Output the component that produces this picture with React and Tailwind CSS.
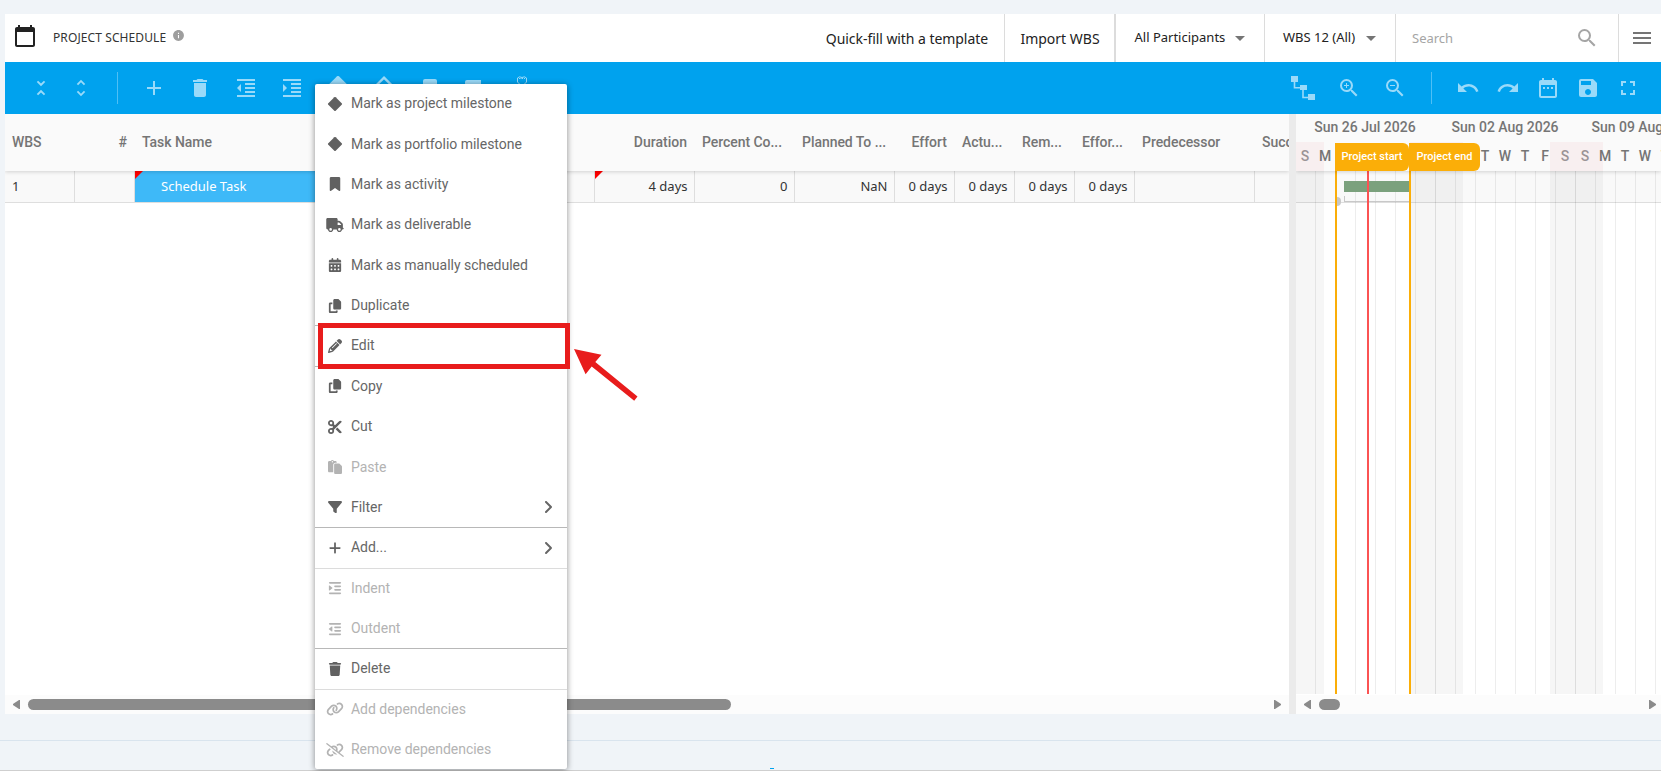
import {
  MdAdd, MdArrowDropDown, MdCalendarToday, MdDateRange, MdDelete, MdFormatIndentDecrease,
  MdFormatIndentIncrease, MdFullscreen, MdInfo, MdMenu, MdRedo, MdSave, MdSearch, MdUndo,
  MdUnfoldLess, MdUnfoldMore, MdZoomIn, MdZoomOut,
} from 'react-icons/md';
import {
  FaAngleRight, FaBookmark, FaCalendarDays, FaCopy, FaFilter, FaIndent, FaLink, FaLinkSlash,
  FaOutdent, FaPaste, FaPencil, FaPlus, FaScissors, FaTrash, FaTruck,
} from 'react-icons/fa6';

// ── Data ────────────────────────────────────────────────────────────────
const COLUMNS = [
  { label: 'WBS', value: '1', width: 70 },
  { label: '#', value: '', width: 60, right: true },
  { label: 'Task Name', value: 'Schedule Task', width: 340, selected: true, changed: true },
  { label: '', value: '', width: 120 },
  { label: 'Duration', value: '4 days', width: 100, right: true, changed: true },
  { label: 'Percent Co...', value: '0', width: 100, right: true },
  { label: 'Planned To ...', value: 'NaN', width: 100, right: true },
  { label: 'Effort', value: '0 days', width: 60, right: true },
  { label: 'Actu...', value: '0 days', width: 60, right: true },
  { label: 'Rem...', value: '0 days', width: 60, right: true },
  { label: 'Effor...', value: '0 days', width: 60, right: true },
  { label: 'Predecessor', value: '', width: 120 },
  { label: 'Successor', value: '', width: 120 },
];

const MENU = [
  { label: 'Mark as project milestone', icon: DiamondIcon },
  { label: 'Mark as portfolio milestone', icon: DiamondIcon },
  { label: 'Mark as activity', icon: FaBookmark },
  { label: 'Mark as deliverable', icon: FaTruck },
  { label: 'Mark as manually scheduled', icon: FaCalendarDays },
  { label: 'Duplicate', icon: FaCopy },
  { label: 'Edit', icon: FaPencil, line: 'dark' },
  { label: 'Copy', icon: FaCopy, line: 'dark' },
  { label: 'Cut', icon: FaScissors },
  { label: 'Paste', icon: FaPaste, disabled: true },
  { label: 'Filter', icon: FaFilter, submenu: true },
  { label: 'Add...', icon: FaPlus, submenu: true, line: 'dark' },
  { label: 'Indent', icon: FaIndent, disabled: true, line: 'light' },
  { label: 'Outdent', icon: FaOutdent, disabled: true },
  { label: 'Delete', icon: FaTrash, line: 'dark' },
  { label: 'Add dependencies', icon: FaLink, disabled: true, line: 'light' },
  { label: 'Remove dependencies', icon: FaLinkSlash, disabled: true },
];

const WEEKS = ['Sun 26 Jul 2026', 'Sun 02 Aug 2026', 'Sun 09 Aug 2026'];
// days below the start/end flags carry no letter
const DAYS = ['S', 'M', '', '', '', '', '', '', '', 'T', 'W', 'T', 'F', 'S', 'S', 'M', 'T', 'W', 'T'];

export default function App() {
  return (
    <div className="relative flex h-[771px] w-[1661px] flex-col overflow-hidden bg-[#f0f4f8] pt-[14px] font-['Noto_Sans',sans-serif] text-[#333]">
      <main className="ml-[5px] flex h-[700px] flex-none flex-col bg-white">
        <Header />
        <Toolbar />
        <div className="flex min-h-0 flex-1">
          <TaskGrid />
          <div className="w-[7px] flex-none bg-[#ebebeb]" />
          <Gantt />
        </div>
      </main>
      <div className="mt-[26px] h-px flex-none bg-[#d9e4ee]" />
      <div className="flex flex-1 items-end border-b border-[#cfcfcf] pb-px">
        <div className="ml-[770px] h-px w-1 bg-[#00a2ee]" />
      </div>
      <ContextMenu />
      <EditCallout />
    </div>
  );
}

// ── Header ──────────────────────────────────────────────────────────────
function Header() {
  return (
    <header className="flex h-12 flex-none items-stretch text-[13px] text-[#222]">
      <div className="flex flex-1 items-center pl-2">
        <MdCalendarToday className="-mt-1 h-6 w-6" />
        <h1 className="ml-4 text-[12px] tracking-[0.1px] text-[#333]">PROJECT SCHEDULE</h1>
        <MdInfo className="-mt-[5px] ml-[6px] h-[13px] w-[13px] text-[#9e9e9e]" />
      </div>
      <button className="pr-4 text-[14px] tracking-[-0.06px]">Quick-fill with a template</button>
      <button className="w-[111px] border-x border-[#dcdcdc] pl-px text-[14px]">Import WBS</button>
      <button className="flex w-[150px] items-center border-x border-[#dcdcdc] pl-[18.5px]">
        All Participants
        <MdArrowDropDown className="ml-[3px] h-6 w-6 text-[#757575]" />
      </button>
      <button className="flex w-[131px] items-center border-r border-[#dcdcdc] pl-[18px]">
        WBS 12 (All)
        <MdArrowDropDown className="ml-1 h-6 w-6 text-[#757575]" />
      </button>
      <div className="flex w-[223px] items-center justify-between border-r border-[#dcdcdc] pl-4 pr-[19px] text-[#a5a5a5]">
        <span className="pt-px">Search</span>
        <MdSearch className="h-6 w-6" />
      </div>
      <button className="w-[42px] pl-[11px]">
        <MdMenu className="h-6 w-6 text-[#757575]" />
      </button>
    </header>
  );
}

// ── Toolbar ─────────────────────────────────────────────────────────────
function Tool({ children, narrow }) {
  return (
    <button className={`flex h-[52px] flex-none items-center justify-center ${narrow ? 'w-10' : 'w-[46px]'}`}>
      {children}
    </button>
  );
}

function Toolbar() {
  return (
    <div className="flex h-[52px] flex-none items-center bg-[#00a2ee] pl-4 text-[#9adaf9]">
      <Tool narrow><MdUnfoldLess className="h-[22px] w-[22px]" /></Tool>
      <Tool narrow><MdUnfoldMore className="h-[22px] w-[22px]" /></Tool>
      <div className="ml-4 mr-[13px] h-8 w-px bg-[#4fbff5]" />
      <Tool><MdAdd className="h-6 w-6" /></Tool>
      <Tool><MdDelete className="h-6 w-6" /></Tool>
      <Tool><MdFormatIndentDecrease className="h-6 w-6" /></Tool>
      <Tool><MdFormatIndentIncrease className="h-6 w-6" /></Tool>
      <Tool><DiamondIcon className="h-6 w-6" /></Tool>
      <Tool>
        <svg viewBox="0 0 24 24" className="h-6 w-6" fill="none" stroke="currentColor" strokeWidth="2.4">
          <path d="M12 1.7 22.3 12 12 22.3 1.7 12Z" />
        </svg>
      </Tool>
      <Tool>
        <svg viewBox="0 0 24 24" className="h-6 w-6" fill="currentColor">
          <path d="M7 3h10a2 2 0 0 1 2 2v16l-7-3-7 3V5a2 2 0 0 1 2-2Z" />
        </svg>
      </Tool>
      <Tool>
        <svg viewBox="0 0 24 24" className="h-6 w-6" fill="currentColor">
          <path d="M3 4h14v4h3l3 4v5h-2a3 3 0 0 1-6 0H9a3 3 0 0 1-6 0H1V6a2 2 0 0 1 2-2Z" />
        </svg>
      </Tool>
      <Tool>
        <svg viewBox="0 0 24 24" className="h-6 w-6" fill="none" stroke="currentColor">
          <path d="M9.5 10V8L7.500 6V2l2-1.200L12 1.500l2.500-.7 2 1.200V6l-2 2v2" />
          <path d="M9 2.500h6" strokeDasharray="1.500 1" />
        </svg>
      </Tool>
      <div className="flex-1" />
      <Tool>
        <svg viewBox="0 0 24 24" className="h-6 w-6" fill="currentColor">
          <path d="M0 0h7v6H0ZM9 9h7v5H9ZM17 18h7v6h-7Z" />
          <path d="M3.5 5v6.7H9M12 13v8.5h6" fill="none" stroke="currentColor" strokeWidth="1.6" />
        </svg>
      </Tool>
      <Tool><MdZoomIn className="h-6 w-6" /></Tool>
      <Tool><MdZoomOut className="h-6 w-6" /></Tool>
      <div className="ml-[13px] mr-4 h-8 w-px bg-[#4fbff5]" />
      <Tool narrow><MdUndo className="h-6 w-6" /></Tool>
      <Tool narrow><MdRedo className="h-6 w-6" /></Tool>
      <Tool narrow><MdDateRange className="h-6 w-6" /></Tool>
      <Tool narrow><MdSave className="h-6 w-6" /></Tool>
      <Tool narrow><MdFullscreen className="h-6 w-6" /></Tool>
      <div className="w-[13px] flex-none" />
    </div>
  );
}

// ── Task grid ───────────────────────────────────────────────────────────
function TaskGrid() {
  return (
    <section className="flex w-[1284px] flex-none flex-col overflow-hidden">
      <div className="relative z-10 flex h-[57px] flex-none items-center bg-[#fafafa] font-[Roboto,sans-serif] text-[14px] font-medium text-[#757575] shadow-[0_1px_4px_rgba(0,0,0,0.16)]">
        {COLUMNS.map((col, i) => (
          <div
            key={i}
            style={{ width: col.width }}
            className={`flex-none whitespace-nowrap pl-[7px] ${
              col.right && !col.label.endsWith('...') ? 'pr-2 text-right' : 'tracking-[-0.05px]'
            }`}
          >
            {col.label}
          </div>
        ))}
      </div>
      <div className="flex h-8 flex-none border-b border-[#dedede] bg-[#f9f9f9] text-[13px]">
        {COLUMNS.map((col, i) => (
          <div
            key={i}
            style={{ width: col.width }}
            className={`relative flex flex-none items-center border-r border-[#dedede] pr-[6.5px] ${
              col.right ? 'justify-end' : ''
            } ${col.selected ? 'bg-[#3eb9f8] pl-[26px] text-white' : 'pl-[7px]'}`}
          >
            {col.changed && (
              <span className="absolute left-0 top-0 border-r-8 border-t-8 border-r-transparent border-t-[#f00]" />
            )}
            {col.value}
          </div>
        ))}
      </div>
      <div className="flex-1" />
      <div className="flex h-[19px] flex-none items-center bg-[#fcfcfc] pl-2 pr-2">
        <ScrollArrow />
        <div className="ml-2 h-[11px] w-[703px] rounded-full bg-[#8b8b8b]" />
        <div className="flex-1" />
        <ScrollArrow right />
      </div>
    </section>
  );
}

function ScrollArrow({ right }) {
  return (
    <svg viewBox="0 0 7 9" className={`h-[9px] w-[7px] flex-none ${right ? 'rotate-180' : ''}`} fill="#8b8b8b">
      <path d="M6 0h1v9H6L.3 5.3a1 1 0 0 1 0-1.6Z" />
    </svg>
  );
}

// ── Gantt chart ─────────────────────────────────────────────────────────
function Gantt() {
  return (
    <section className="relative flex min-w-0 flex-1 flex-col overflow-hidden">
      <div className="relative z-10 flex h-[57px] flex-none flex-col bg-[#fafafa] font-[Roboto,sans-serif] text-[14px] font-medium text-[#757575] shadow-[0_1px_4px_rgba(0,0,0,0.16)]">
        <div className="-ml-px flex h-7 items-center pb-0.5">
          {WEEKS.map(week => (
            <div key={week} className="w-[140px] flex-none whitespace-nowrap text-center">{week}</div>
          ))}
        </div>
        <div className="relative h-[29px]">
          <Weekends color="bg-[#f8eff0]" />
          <div className="relative -ml-px flex h-full items-center">
            {DAYS.map((day, i) => (
              <div
                key={i}
                className={`w-5 flex-none text-center ${day === 'S' ? 'text-[#9b9496]' : ''}`}
              >
                {day}
              </div>
            ))}
          </div>
        </div>
        {/* project range flags sit over the day letters */}
        <div className="absolute left-[39px] top-[29px] flex h-7 text-[11px] text-white">
          <span className="flex w-[74px] items-center justify-center rounded-r-md bg-[#fbae08] pt-px">Project start</span>
          <span className="flex w-[71px] items-center justify-center rounded-r-md bg-[#fbae08] pt-px">Project end</span>
        </div>
      </div>

      <div className="relative flex-1">
        <div className="h-8 border-b border-[#dedede] bg-[#f9f9f9]" />
        <Weekends color="bg-black/[0.035]" />
        <div className="absolute inset-y-0 -left-px flex">
          {DAYS.map((_, i) => (
            <div
              key={i}
              className={`w-5 flex-none border-l ${i % 7 === 0 ? 'border-black/10' : 'border-black/[0.07]'}`}
            />
          ))}
        </div>
        {/* summary bracket, start dot and task bar */}
        <div className="absolute left-[48px] top-[25px] h-1.5 w-[66px] border-b border-l border-[#c8c8c8]" />
        <div className="absolute left-[41px] top-[26px] h-[9px] w-[4px] rounded-r-full bg-[#c8c8c8]" />
        <div className="absolute left-[48px] top-[10px] h-[11px] w-[65px] bg-[#7ba17d]" />
        <div className="absolute inset-y-0 left-[71px] w-0.5 bg-[#fb5353]" />
        <div className="absolute inset-y-0 left-[39px] w-0.5 bg-[#fbae08]" />
        <div className="absolute inset-y-0 left-[113px] w-0.5 bg-[#fbae08]" />
      </div>

      <div className="flex h-[20px] flex-none items-center border-t border-white bg-[#fcfcfc] pl-2 pr-[5px]">
        <ScrollArrow />
        <div className="ml-2 h-[11px] w-[21px] rounded-full bg-[#8b8b8b]" />
        <div className="flex-1" />
        <ScrollArrow right />
      </div>
    </section>
  );
}

function Weekends({ color }) {
  return (
    <>
      <div className={`absolute inset-y-0 left-0 w-7 ${color}`} />
      <div className={`absolute inset-y-0 left-[114px] w-[53px] ${color}`} />
      <div className={`absolute inset-y-0 left-[254px] w-[53px] ${color}`} />
    </>
  );
}

// ── Context menu ────────────────────────────────────────────────────────
function ContextMenu() {
  return (
    <div className="absolute left-[315px] top-[84px] z-20 h-[685px] w-[252px] rounded-[2px] bg-white font-[Roboto,sans-serif] text-[14px] text-[#666] shadow-[0_1px_6px_rgba(0,0,0,0.45)]">
      <ul className="-mt-px">
        {MENU.map(({ label, icon: Icon, disabled, submenu, line }) => (
          <li
            key={label}
            className={`flex h-[40.375px] items-center border-t pl-[11px] ${
              line === 'dark' ? 'border-[#b8b8b8]' : line === 'light' ? 'border-[#dcdcdc]' : 'border-transparent'
            } ${disabled ? 'text-[#b3b3b3]' : ''}`}
          >
            <Icon className={`h-[14px] w-[18px] flex-none ${disabled ? '' : 'text-[#616161]'}`} />
            <span className="ml-[7px] flex-1 whitespace-nowrap tracking-[-0.02px]">{label}</span>
            {submenu && <FaAngleRight className="mr-[11px] h-4 w-4" />}
          </li>
        ))}
      </ul>
    </div>
  );
}

function DiamondIcon({ className }) {
  return (
    <svg viewBox="0 0 24 24" className={className} fill="currentColor">
      <path d="M10.8.5a1.7 1.7 0 0 1 2.4 0l10.3 10.3a1.7 1.7 0 0 1 0 2.4L13.2 23.5a1.7 1.7 0 0 1-2.4 0L.5 13.2a1.7 1.7 0 0 1 0-2.4Z" />
    </svg>
  );
}

// Red frame and arrow that point at the Edit entry
function EditCallout() {
  return (
    <>
      <div className="absolute left-[318px] top-[323px] z-30 h-[46px] w-[252px] border-[5px] border-[#e81c1c]" />
      <svg viewBox="0 0 66 56" className="absolute left-[573px] top-[348px] z-30 h-14 w-[66px]" fill="#e81c1c">
        <path d="M1 1 28.5 6.7 22.3 14 64.5 48.5 61.2 52.8 18.7 18.5 12.6 26.2Z" />
      </svg>
    </>
  );
}
